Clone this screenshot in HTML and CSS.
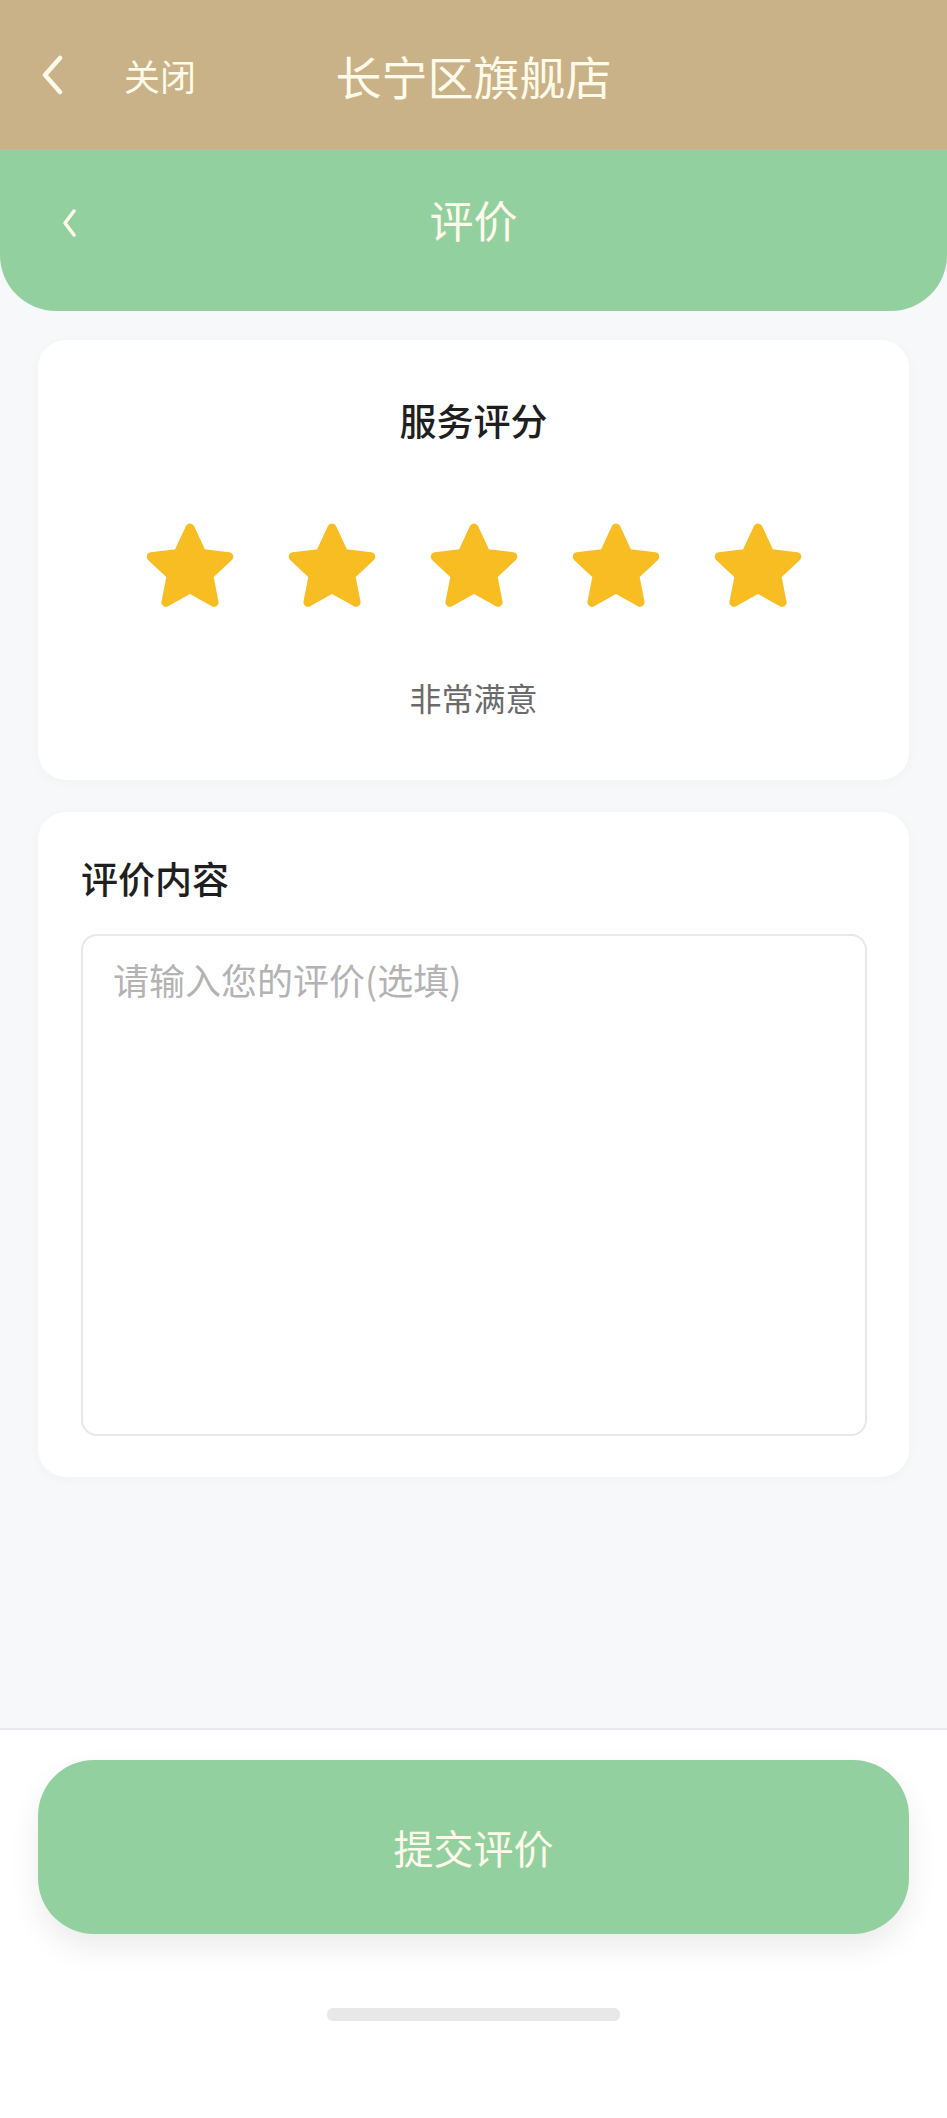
FILE: index.html
```html
<!DOCTYPE html>
<html lang="zh-CN">
<head>
  <meta charset="UTF-8" />
  <title>评价</title>
  <link rel="stylesheet" href="styles.css">
</head>
<body>

  <div class="app-bar">
    <div class="app-left">
      <svg class="chev" viewBox="0 0 24 40" width="24" height="40">
        <path d="M20 3 L5 20 L20 37" fill="none" stroke="#fffaea" stroke-width="4.5" stroke-linecap="round" stroke-linejoin="round"/>
      </svg>
      <span class="close">关闭</span>
    </div>
    <div class="app-title">长宁区旗舰店</div>
    <div></div>
  </div>

  <div class="page-head">
    <svg class="chev-small" viewBox="0 0 16 32" width="16" height="32">
      <path d="M13 4 L4 16 L13 28" fill="none" stroke="#fffaea" stroke-width="3.5" stroke-linecap="round" stroke-linejoin="round"/>
    </svg>
    <h1>评价</h1>
  </div>

  <main class="content">
    <section class="card rating-card">
      <h2>服务评分</h2>
      <div class="stars" id="stars"></div>
      <p class="rating-label" id="ratingLabel">非常满意</p>
    </section>

    <section class="card comment-card">
      <h3>评价内容</h3>
      <textarea class="comment" placeholder="请输入您的评价(选填)"></textarea>
    </section>
  </main>

  <footer class="footer">
    <button class="submit-btn">提交评价</button>
    <div class="home-bar"></div>
  </footer>

  <script>
    const labels = ['非常不满意', '不满意', '一般', '满意', '非常满意'];
    const starsBox = document.getElementById('stars');
    const label = document.getElementById('ratingLabel');
    let score = 5;

    // Draw the five stars
    function drawStars() {
      starsBox.innerHTML = '';
      for (let i = 1; i <= 5; i++) {
        const color = i <= score ? '#f8bd22' : '#e3e3e3';
        const span = document.createElement('span');
        span.className = 'star';
        span.innerHTML = `
          <svg viewBox="0 0 24 23" width="98" height="94">
            <path d="M12 2.2 L14.9 8.4 L21.5 9.2 L16.6 13.8 L17.9 20.4 L12 17.1 L6.1 20.4 L7.4 13.8 L2.5 9.2 L9.1 8.4 Z"
              fill="${color}" stroke="${color}" stroke-width="2.2" stroke-linejoin="round"/>
          </svg>`;
        span.addEventListener('click', () => {
          score = i;
          label.textContent = labels[i - 1];
          drawStars();
        });
        starsBox.appendChild(span);
      }
    }

    drawStars();
  </script>

</body>
</html>
```

FILE: styles.css
```css
body {
  margin: 0;
  font-family: "Noto Sans CJK SC", "Noto Sans", sans-serif;
  background: #f7f8fa;
}

.app-bar {
  height: 149px;
  background: #c9b287;
  display: grid;
  grid-template-columns: 1fr auto 1fr;
  align-items: center;
  color: #fffaea;
}

.app-left {
  display: flex;
  align-items: center;
  padding-left: 40px;
}

.chev {
  width: 24px;
  height: 40px;
}

.close {
  margin-left: 60px;
  font-size: 36px;
}

.app-title {
  font-size: 46px;
  font-weight: 400;
}

.page-head {
  position: relative;
  height: 140px;
  padding-bottom: 22px;
  background: #92d09f;
  border-radius: 0 0 56px 56px;
  display: flex;
  align-items: center;
  justify-content: center;
}

.chev-small {
  position: absolute;
  left: 61px;
  top: 58px;
}

.page-head h1 {
  margin: 0;
  font-size: 44px;
  font-weight: 400;
  color: #fffaea;
}

.content {
  padding: 29px 38px 251px;
}

.card {
  background: white;
  border-radius: 28px;
  box-shadow: 0 2px 12px rgba(0,0,0,0.03);
}

.rating-card {
  padding: 56px 0 61px;
  text-align: center;
}

.rating-card h2 {
  margin: 0;
  font-size: 37px;
  line-height: 48px;
  font-weight: 500;
  color: #1f1f1f;
}

.stars {
  margin-top: 75px;
  display: flex;
  justify-content: center;
  gap: 44px;
}

.star {
  display: block;
  width: 98px;
  height: 94px;
  cursor: pointer;
}

.star svg {
  display: block;
}

.rating-label {
  margin: 62px 0 0;
  font-size: 32px;
  line-height: 44px;
  color: #6b6b6b;
}

.comment-card {
  margin-top: 32px;
  padding: 42px 42px 41px 43px;
}

.comment-card h3 {
  margin: 0;
  font-size: 37px;
  line-height: 48px;
  font-weight: 500;
  color: #1f1f1f;
}

.comment {
  display: block;
  box-sizing: border-box;
  width: 100%;
  height: 502px;
  margin-top: 32px;
  padding: 20px 30px;
  border: 2px solid #e8e8e8;
  border-radius: 16px;
  font-family: "Noto Sans CJK SC", "Noto Sans", sans-serif;
  font-size: 36px;
  line-height: 46px;
  color: #333;
  resize: none;
  outline: none;
}

.comment::placeholder {
  color: #b3b3b3;
}

.footer {
  background: white;
  border-top: 2px solid #e9eaee;
  padding: 30px 38px 0;
  height: 388px;
}

.submit-btn {
  display: block;
  width: 100%;
  height: 174px;
  border: none;
  border-radius: 56px;
  background: #92d09f;
  color: #fffaea;
  font-family: "Noto Sans CJK SC", "Noto Sans", sans-serif;
  font-size: 40px;
  font-weight: 400;
  box-shadow: 0 14px 30px rgba(0,0,0,0.08);
  cursor: pointer;
}

.home-bar {
  width: 293px;
  height: 13px;
  margin: 74px auto 0;
  border-radius: 6px;
  background: #e8e8e8;
}
```
